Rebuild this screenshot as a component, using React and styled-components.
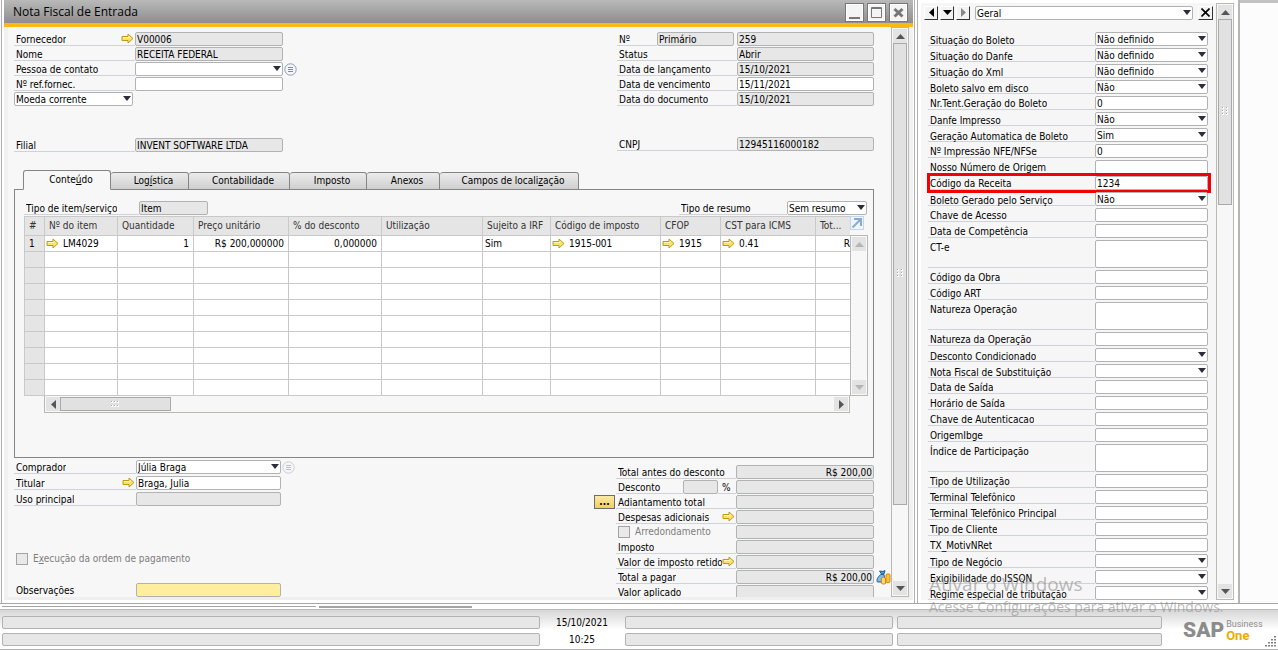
import { useId } from "react"
import styled, { createGlobalStyle, css } from "styled-components"

const GlobalStyle = createGlobalStyle`
  * {
    box-sizing: border-box;
  }

  body {
    margin: 0;
    background: #fcfcfc;
    color: #000;
    font: 10px/14px "DejaVu Sans Condensed", Tahoma, sans-serif;
  }

  button, input, select, textarea {
    font: inherit;
    color: inherit;
    margin: 0;
  }
`

const Screen = styled.div`
  display: flex;
  flex-direction: column;
  height: 100vh;
  min-height: 640px;
  overflow: hidden;
  position: relative;
`

const Workspace = styled.div`
  flex: 1;
  min-height: 0;
  display: flex;
`

/* ---------- shared form parts ---------- */

const box = css`
  display: block;
  width: 100%;
  height: ${({ $tall }) => ($tall ? "28px" : "14px")};
  padding: 1px 1px 0;
  border: 1px solid #b0b2b3;
  border-radius: 2px;
  background: ${({ $tone }) =>
    $tone === "grey" ? "#e7e7e7" : $tone === "yellow" ? "#ffee9e" : "#fff"};
  text-align: ${({ $right }) => ($right ? "right" : "left")};
  outline: none;
`

const TextBox = styled.input`
  ${box}
`

const Area = styled.textarea`
  ${box}
  resize: none;
`

const SelectBox = styled.select`
  ${box}
  appearance: none;
  padding: 0 14px 0 1px;
`

const SelectWrap = styled.span`
  display: block;
  position: relative;
  width: 100%;

  &::after {
    content: "";
    position: absolute;
    top: 4px;
    right: 2px;
    border: 4px solid transparent;
    border-top: 5px solid #2b2d3a;
    border-bottom: 0;
    pointer-events: none;
  }
`

const Row = styled.div`
  display: grid;
  grid-template-columns: ${({ $cols }) => $cols};
  margin-bottom: ${({ $gap }) => $gap || "1px"};
  position: relative;
`

const Label = styled.label`
  display: flex;
  align-items: flex-start;
  justify-content: space-between;
  border-bottom: ${({ $plain }) => ($plain ? "0" : "1px solid #cfd3d8")};
  padding: ${({ $low }) => ($low ? "2px" : "1px")} 1px 0 2px;
  height: ${({ $tall }) => ($tall ? "28px" : "14px")};
  white-space: nowrap;
  min-width: 0;

  & span {
    overflow: hidden;
  }
`

const Highlight = styled.div`
  position: absolute;
  inset: -3px -3px -3px -1px;
  border: 3px solid #f40000;
  pointer-events: none;
`

function Select({ options, ...rest }) {
  return (
    <SelectWrap>
      <SelectBox {...rest}>
        {options.map((o) => <option key={o}>{o}</option>)}
      </SelectBox>
    </SelectWrap>
  )
}

const ArrowIcon = styled.svg`
  flex: none;
  display: block;
`

function Arrow() {
  return (
    <ArrowIcon width="13" height="11" viewBox="0 0 13 11" aria-hidden="true">
      <path d="M1 3.5H7V1L12 5.5L7 10V7.5H1Z" fill="#fbe36a" stroke="#bd9a1c" />
      <path d="M2 4.5H8V3.2" fill="none" stroke="#fff6bd" />
    </ArrowIcon>
  )
}

const RoundButton = styled.button`
  position: absolute;
  left: 100%;
  top: 1px;
  width: 13px;
  height: 13px;
  margin-left: 1px;
  padding: 0;
  border: 0;
  background: none;
  opacity: ${({ $faded }) => ($faded ? 0.5 : 1)};

  & svg {
    display: block;
  }
`

function ListButton({ faded }) {
  return (
    <RoundButton aria-label="Lista" $faded={faded}>
      <svg width="13" height="13" viewBox="0 0 13 13">
        <circle cx="6.5" cy="6.5" r="5.7" fill="#f4f6fa" stroke={faded ? "#a6a6a6" : "#8e9bb8"} />
        <path d="M4 4.5H9M4 6.5H9M4 8.5H9" stroke="#8288a0" />
      </svg>
    </RoundButton>
  )
}

function Field({ label, value = "", cols, gap, tone, options, tall, arrow, highlight, right, low, list, faded }) {
  const id = useId()
  let control = <TextBox id={id} defaultValue={value} readOnly={tone === "grey"} $tone={tone} $right={right} />
  if (options) control = <Select id={id} options={options} />
  if (tall) control = <Area id={id} defaultValue={value} $tall />
  return (
    <Row $cols={cols} $gap={gap}>
      <Label htmlFor={id} $tall={tall} $low={low}>
        <span>{label}</span>
        {arrow && <Arrow />}
      </Label>
      {control}
      {list && <ListButton faded={faded} />}
      {highlight && <Highlight />}
    </Row>
  )
}

/* ---------- scroll bars ---------- */

const Bar = styled.div`
  display: flex;
  flex-direction: ${({ $row }) => ($row ? "row" : "column")};
  flex: none;
  ${({ $row }) => ($row ? "height: 17px;" : "width: 18px;")}
  padding: 1px;
  border: 1px solid #b9b9b4;
  border-top-width: ${({ $row }) => ($row ? "0" : "1px")};
  background: #f7f7f7;
`

const BarButton = styled.button`
  flex: none;
  display: grid;
  place-items: center;
  width: ${({ $row }) => ($row ? "14px" : "auto")};
  height: ${({ $row }) => ($row ? "auto" : "14px")};
  padding: 0;
  border: 0;
  background: #e3e3e3;
`

const Thumb = styled.div`
  flex: ${({ $size }) => $size} 0 0;
  display: grid;
  place-items: center;
  border: 1px solid #a9a9a9;
  background: #e1e1e1;
`

const Rest = styled.div`
  flex: ${({ $size }) => $size} 0 0;
`

const turns = { up: 0, right: 90, down: 180, left: 270 }

function Tri({ dir, color = "#555" }) {
  return (
    <svg width="9" height="9" viewBox="0 0 9 9" aria-hidden="true">
      <path d="M0 7L4.5 2L9 7Z" fill={color} transform={`rotate(${turns[dir]} 4.5 4.5)`} />
    </svg>
  )
}

function Grip({ row }) {
  const dots = row ? [[0, 1], [3, 1], [6, 1], [0, 5], [3, 5], [6, 5]] : [[1, 0], [5, 0], [1, 3], [5, 3], [1, 6], [5, 6]]
  return (
    <svg width="9" height="9" viewBox="0 0 9 9" aria-hidden="true">
      {dots.map(([x, y]) => (
        <g key={`${x}-${y}`}>
          <rect x={x} y={y} width="2" height="2" fill="#fff" />
          <rect x={x} y={y} width="1" height="1" fill="#a5a5a5" />
        </g>
      ))}
    </svg>
  )
}

function ScrollBar({ row, thumb, rest, color }) {
  return (
    <Bar $row={row}>
      <BarButton $row={row} aria-label="Voltar"><Tri dir={row ? "left" : "up"} color={color} /></BarButton>
      {thumb && <Thumb $size={thumb}><Grip row={row} /></Thumb>}
      <Rest $size={rest} />
      <BarButton $row={row} aria-label="Avançar"><Tri dir={row ? "right" : "down"} color={color} /></BarButton>
    </Bar>
  )
}

/* ---------- invoice window ---------- */

const Window = styled.section`
  flex: 1;
  min-width: 0;
  display: flex;
  flex-direction: column;
  margin-left: 1px;
  padding: 0 1px 0 2px;
  border-left: 1px solid #adadad;
  background: #fff;
`

const TitleBar = styled.header`
  display: flex;
  align-items: center;
  justify-content: space-between;
  flex: none;
  height: 27px;
  padding: 1px 5px 0 9px;
  border-bottom: 4px solid #fdb813;
  background: linear-gradient(#b9b9b9, #8e8e8e);

  & h1 {
    margin: 0;
    font: 12px/22px "Open Sans", sans-serif;
  }
`

const WindowButtons = styled.div`
  display: flex;
  gap: 3px;

  & button {
    width: 19px;
    height: 19px;
    padding: 0;
    border: 1px solid #777;
    background: #f4f4f4;
    box-shadow: inset 0 0 0 1px #fff;
  }

  & svg {
    display: block;
  }
`

const WindowBody = styled.div`
  flex: 1;
  min-height: 0;
  display: flex;
  margin-bottom: 3px;
  border-left: 4px solid #f1f1f1;
  border-right: 4px solid #f1f1f1;
  border-bottom: 3px solid #efefef;
  background: #f7f7f7;
`

const Content = styled.div`
  flex: 1;
  min-width: 0;
  overflow: hidden;
  padding: 5px 17px 0 6px;
`

const Split = styled.div`
  display: flex;
  justify-content: space-between;
`

const Column = styled.div`
  width: ${({ $w }) => $w};
  padding-top: ${({ $top }) => $top || "0"};
`

const Narrow = styled.div`
  width: 119px;
`

const Spacer = styled.div`
  height: ${({ $h }) => $h};
`

const Tabs = styled.div`
  display: flex;
  align-items: flex-end;
  height: 20px;
  padding-left: 9px;
  margin: 18px 0 -1px;
  position: relative;
`

const Tab = styled.button`
  width: ${({ $w }) => $w}px;
  height: ${({ $active }) => ($active ? "20px" : "18px")};
  padding: 0 0 0 8px;
  border: 1px solid #858585;
  border-left-width: ${({ $active }) => ($active ? "1px" : "0")};
  border-bottom-color: ${({ $active }) => ($active ? "#f7f7f7" : "#858585")};
  border-radius: 3px 3px 0 0;
  background: ${({ $active }) => ($active ? "#f7f7f7" : "linear-gradient(#ececec, #cfcfcf)")};
  white-space: nowrap;
`

const Panel = styled.div`
  border: 1px solid #858585;
  padding: 11px 5px 44px 9px;
`

const PanelHead = styled.div`
  display: flex;
  justify-content: space-between;
  padding-right: 1px;
`

const HeadField = styled.div`
  width: ${({ $w }) => $w};
`

const TableArea = styled.div`
  display: flex;
`

const TableSide = styled.div`
  display: flex;
  flex-direction: column;
  width: 18px;
  flex: none;

  & > div {
    flex: 1;
  }
`

const Expand = styled.button`
  width: 14px;
  height: 14px;
  margin-bottom: 5px;
  padding: 0;
  border: 1px solid #bdd7ee;
  background: #eef5fb;

  & svg {
    display: block;
  }
`

const TableClip = styled.div`
  flex: 1;
  min-width: 0;
  overflow: hidden;
`

const Table = styled.table`
  width: 100%;
  table-layout: fixed;
  border-collapse: collapse;

  & th, & td {
    height: 16px;
    padding: 0 4px;
    border: 1px solid #c9c9c9;
    line-height: 14px;
    font-weight: normal;
    text-align: left;
    white-space: nowrap;
    overflow: hidden;
    background: #fff;
  }

  & thead th {
    height: 19px;
    color: #333;
  }

  & thead th, & th[scope="row"] {
    background: #e5e5e5;
  }

  & tr > :last-child {
    border-right: 0;
    padding-right: 0;
  }
`

const Cell = styled.span`
  display: flex;
  align-items: center;
  justify-content: ${({ $right }) => ($right ? "flex-end" : "flex-start")};
  gap: 4px;
  margin-left: ${({ $arrow }) => ($arrow ? "-3px" : "-2px")};
`

const HScroll = styled.div`
  margin: 0 18px 0 20px;
`

const Check = styled.label`
  display: flex;
  align-items: center;
  gap: 5px;
  height: 14px;
  padding-left: 2px;
  color: #7d7d7d;

  & input {
    appearance: none;
    width: 12px;
    height: 12px;
    border: 1px solid #a3a3a3;
    background: #e9e9e9;
  }
`

const Percent = styled.div`
  display: grid;
  grid-template-columns: 67px 35px 18px;
  height: 14px;

  & > span {
    padding: 1px 0 0 4px;
    height: 14px;
    border-bottom: 1px solid #cfd3d8;
  }
`

const MoreButton = styled.button`
  position: absolute;
  right: 100%;
  top: 0;
  width: 21px;
  height: 14px;
  margin-right: 1px;
  padding: 0;
  border: 1px solid #6d6d6d;
  background: linear-gradient(#fbe9a8, #f2cf57);
  font-weight: bold;
  line-height: 10px;
`

const MoneyButton = styled.button`
  position: absolute;
  left: 100%;
  top: 0;
  margin-left: 2px;
  padding: 0;
  border: 0;
  background: none;

  & svg {
    display: block;
  }
`

const tabs = [
  { before: "Conte", key: "ú", after: "do", w: 88, active: true },
  { before: "Log", key: "í", after: "stica", w: 78 },
  { before: "Contabilidade", w: 101 },
  { before: "Imposto", w: 77 },
  { before: "Anexos", w: 73 },
  { before: "Campos de locali", key: "z", after: "ação", w: 139 },
]

const columns = [
  { title: "#", w: 20 },
  { title: "Nº do item", w: 73, value: "LM4029", arrow: true },
  { title: "Quantidade", w: 76, value: "1", right: true },
  { title: "Preço unitário", w: 95, value: "R$ 200,000000", right: true },
  { title: "% do desconto", w: 93, value: "0,000000", right: true },
  { title: "Utilização", w: 101 },
  { title: "Sujeito a IRF", w: 68, value: "Sim" },
  { title: "Código de imposto", w: 110, value: "1915-001", arrow: true },
  { title: "CFOP", w: 60, value: "1915", arrow: true },
  { title: "CST para ICMS", w: 95, value: "0.41", arrow: true },
  { title: "Tot...", value: "R", right: true },
]

const leftCols = "121px 1fr"
const rightCols = "120px 1fr"

function Header() {
  const id = useId()
  return (
    <Split>
      <Column $w="269px">
        <Field cols={leftCols} label="Fornecedor" value="V00006" tone="grey" arrow />
        <Field cols={leftCols} label="Nome" value="RECEITA FEDERAL" tone="grey" />
        <Field cols={leftCols} label="Pessoa de contato" options={[""]} list />
        <Field cols={leftCols} label="Nº ref.fornec." />
        <Narrow>
          <Select options={["Moeda corrente"]} aria-label="Moeda" />
        </Narrow>
        <Spacer $h="32px" />
        <Field cols={leftCols} gap="0" label="Filial" value="INVENT SOFTWARE LTDA" tone="grey" />
      </Column>
      <Column $w="257px">
        <Row $cols="40px 77px 3px 1fr">
          <Label htmlFor={id}>Nº</Label>
          <TextBox aria-label="Série" defaultValue="Primário" readOnly $tone="grey" />
          <i />
          <TextBox id={id} defaultValue="259" readOnly $tone="grey" />
        </Row>
        <Field cols={rightCols} label="Status" value="Abrir" tone="grey" />
        <Field cols={rightCols} label="Data de lançamento" value="15/10/2021" tone="grey" />
        <Field cols={rightCols} label="Data de vencimento" value="15/11/2021" />
        <Field cols={rightCols} label="Data do documento" value="15/10/2021" tone="grey" />
        <Spacer $h="30px" />
        <Field cols={rightCols} gap="0" label="CNPJ" value="12945116000182" tone="grey" />
      </Column>
    </Split>
  )
}

function ItemsTable() {
  return (
    <TableArea>
      <TableClip>
        <Table>
          <colgroup>
            {columns.map((c) => <col key={c.title} width={c.w} />)}
          </colgroup>
          <thead>
            <tr>{columns.map((c) => <th key={c.title} scope="col">{c.title}</th>)}</tr>
          </thead>
          <tbody>
            {Array.from({ length: 10 }, (_, i) => (
              <tr key={i}>
                <th scope="row">{i === 0 ? "1" : ""}</th>
                {columns.slice(1).map((c) => (
                  <td key={c.title}>
                    {i === 0 && c.value && (
                      <Cell $right={c.right} $arrow={c.arrow}>
                        {c.arrow && <Arrow />}
                        {c.value}
                      </Cell>
                    )}
                  </td>
                ))}
              </tr>
            ))}
          </tbody>
        </Table>
      </TableClip>
      <TableSide>
        <Expand aria-label="Expandir">
          <svg width="12" height="12" viewBox="0 0 12 12">
            <path d="M1.5 10.5L9 3M3 2H10V9" fill="none" stroke="#8ea9cf" strokeWidth="2" />
          </svg>
        </Expand>
        <ScrollBar rest={1} color="#b5b5b5" />
      </TableSide>
    </TableArea>
  )
}

function Totals() {
  const id = useId()
  return (
    <Column $w="258px" $top="7px">
      <Field cols={rightCols} label="Total antes do desconto" value="R$ 200,00" tone="grey" right />
      <Row $cols={rightCols}>
        <Percent>
          <Label htmlFor={id}>Desconto</Label>
          <TextBox aria-label="Desconto em porcentagem" readOnly $tone="grey" />
          <span>%</span>
        </Percent>
        <TextBox id={id} readOnly $tone="grey" />
      </Row>
      <Row $cols="1fr" $gap="0">
        <Field cols={rightCols} label="Adiantamento total" tone="grey" />
        <MoreButton>...</MoreButton>
      </Row>
      <Field cols={rightCols} label="Despesas adicionais" tone="grey" arrow />
      <Row $cols={rightCols}>
        <Check><input type="checkbox" disabled />Arredondamento</Check>
        <TextBox aria-label="Arredondamento" readOnly $tone="grey" />
      </Row>
      <Field cols={rightCols} label="Imposto" tone="grey" />
      <Field cols={rightCols} label="Valor de imposto retido" tone="grey" arrow />
      <Row $cols="1fr" $gap="0">
        <Field cols={rightCols} label="Total a pagar" value="R$ 200,00" tone="grey" right />
        <MoneyButton aria-label="Meios de pagamento">
          <svg width="15" height="15" viewBox="0 0 15 15">
            <path d="M3.5 1L7 1.5L9 0.5L8 4H5.500Z" fill="#4fa3dc" stroke="#1f5f95" />
            <path d="M5 4.500H8L9 12H1.500C0 10 2 6.500 5 4.500Z" fill="#7fbfea" stroke="#1f5f95" />
            <path d="M10 4.500Q12 3 14 4.500V12Q12 13.500 10 12Z" fill="#ffc04a" stroke="#e08a00" />
            <path d="M5.500 8Q7.500 6.500 9.500 8V13.500Q7.500 14.800 5.500 13.500Z" fill="#ffd77c" stroke="#e08a00" />
          </svg>
        </MoneyButton>
      </Row>
      <Field cols={rightCols} label="Valor aplicado" tone="grey" />
    </Column>
  )
}

function InvoiceWindow() {
  return (
    <Window>
      <TitleBar>
        <h1>Nota Fiscal de Entrada</h1>
        <WindowButtons>
          <button aria-label="Minimizar">
            <svg width="17" height="17"><path d="M3 14H14" stroke="#777" strokeWidth="2" /></svg>
          </button>
          <button aria-label="Maximizar">
            <svg width="17" height="17"><path d="M3.500 3.500H13.500V13.500H3.500ZM3 4.500H14" fill="none" stroke="#777" /></svg>
          </button>
          <button aria-label="Fechar">
            <svg width="17" height="17"><path d="M4.500 5L12.500 12.500M12.500 5L4.500 12.500" stroke="#777" strokeWidth="3" /></svg>
          </button>
        </WindowButtons>
      </TitleBar>
      <WindowBody>
        <Content>
          <Header />
          <Tabs role="tablist">
            {tabs.map((t) => (
              <Tab key={t.before} role="tab" aria-selected={!!t.active} $w={t.w} $active={t.active}>
                {t.before}{t.key && <u>{t.key}</u>}{t.after}
              </Tab>
            ))}
          </Tabs>
          <Panel>
            <PanelHead>
              <HeadField $w="184px">
                <Field cols="115px 1fr" label="Tipo de item/serviço" value="Item" tone="grey" />
              </HeadField>
              <HeadField $w="188px">
                <Field cols="108px 1fr" label="Tipo de resumo" options={["Sem resumo"]} />
              </HeadField>
            </PanelHead>
            <ItemsTable />
            <HScroll>
              <ScrollBar row thumb={109} rest={662} />
            </HScroll>
          </Panel>
          <Split>
            <Column $w="267px" $top="2px">
              <Field cols="122px 1fr" gap="2px" label="Comprador" options={["Júlia Braga"]} list faded />
              <Field cols="122px 1fr" gap="2px" label="Titular" value="Braga, Julia" arrow />
              <Field cols="122px 1fr" gap="2px" label="Uso principal" tone="grey" />
              <Spacer $h="44px" />
              <Check><input type="checkbox" disabled /><span>E<u>x</u>ecução da ordem de pagamento</span></Check>
              <Spacer $h="17px" />
              <Row $cols="122px 1fr">
                <Label htmlFor="obs" $plain>Observações</Label>
                <TextBox id="obs" $tone="yellow" />
              </Row>
            </Column>
            <Totals />
          </Split>
        </Content>
        <ScrollBar thumb={463} rest={77} />
      </WindowBody>
    </Window>
  )
}

/* ---------- user defined fields panel ---------- */

const Side = styled.aside`
  display: flex;
  flex: none;
  width: 326px;
  border-left: 4px double #b0b0b0;
  border-right: 2px solid #b5b5b5;
  background: #fff;
  padding: 3px 4px 3px 3px;
`

const SideMain = styled.div`
  flex: 1;
  min-width: 0;
  overflow: hidden;
  padding: 2px 8px 0 7px;
  background: #f6f6f6;
`

const Toolbar = styled.div`
  display: grid;
  grid-template-columns: 14px 14px 14px 1fr 15px;
  align-items: center;
  gap: 2px;
  height: 15px;
  margin: 0 -5px 12px -4px;

  & > span {
    margin-left: 3px;
    width: auto;
    margin-right: 3px;
  }
`

const ToolButton = styled.button`
  display: grid;
  place-items: center;
  height: 14px;
  padding: 0;
  border: 1px solid #fff;
  border-right-color: #333;
  border-bottom-color: #333;
  background: #f3f3f3;
`

const Desktop = styled.div`
  flex: none;
  width: 38px;
  border-top: 3px solid #c2c2c2;
  background: #fcfcfc;
`

const sideFields = [
  { label: "Situação do Boleto", options: ["Não definido"] },
  { label: "Situação do Danfe", options: ["Não definido"] },
  { label: "Situação do Xml", options: ["Não definido"] },
  { label: "Boleto salvo em disco", options: ["Não"] },
  { label: "Nr.Tent.Geração do Boleto", value: "0" },
  { label: "Danfe Impresso", options: ["Não"] },
  { label: "Geração Automatica de Boleto", options: ["Sim"] },
  { label: "Nº Impressão NFE/NFSe", value: "0" },
  { label: "Nosso Número de Origem" },
  { label: "Código da Receita", value: "1234", highlight: true },
  { label: "Boleto Gerado pelo Serviço", options: ["Não"] },
  { label: "Chave de Acesso" },
  { label: "Data de Competência" },
  { label: "CT-e", tall: true },
  { label: "Código da Obra" },
  { label: "Código ART" },
  { label: "Natureza Operação", tall: true },
  { label: "Natureza da Operação" },
  { label: "Desconto Condicionado", options: [""] },
  { label: "Nota Fiscal de Substituição", options: [""] },
  { label: "Data de Saída" },
  { label: "Horário de Saída" },
  { label: "Chave de Autenticacao" },
  { label: "OrigemIbge" },
  { label: "Índice de Participação", tall: true },
  { label: "Tipo de Utilização" },
  { label: "Terminal Telefônico" },
  { label: "Terminal Telefônico Principal" },
  { label: "Tipo de Cliente" },
  { label: "TX_MotivNRet" },
  { label: "Tipo de Negócio", options: [""] },
  { label: "Exigibilidade do ISSQN", options: [""] },
  { label: "Regime especial de tributação", options: [""] },
]

function SidePanel() {
  return (
    <Side>
      <SideMain>
        <Toolbar>
          <ToolButton aria-label="Anterior"><Tri dir="left" color="#000" /></ToolButton>
          <ToolButton aria-label="Lista"><Tri dir="down" color="#000" /></ToolButton>
          <ToolButton aria-label="Próximo"><Tri dir="right" color="#888" /></ToolButton>
          <Select options={["Geral"]} aria-label="Categoria" />
          <ToolButton aria-label="Fechar">
            <svg width="9" height="9" viewBox="0 0 9 9"><path d="M0.500 0.500L8.500 8.500M8.500 0.500L0.500 8.500" stroke="#000" strokeWidth="1.600" /></svg>
          </ToolButton>
        </Toolbar>
        {sideFields.map((f) => (
          <Field key={f.label} cols="167px 1fr" gap="2px" low={!!f.options} {...f} />
        ))}
      </SideMain>
      <ScrollBar thumb={184} rest={380} />
    </Side>
  )
}

/* ---------- bottom ---------- */

const Dock = styled.div`
  flex: none;
  display: flex;
  gap: 3px;
  height: 7px;
  padding: 2px 0 0 2px;
  border-top: 1px solid #a6a6a6;
  border-bottom: 1px solid #b9b9b9;
  background: #fff;
`

const DockItem = styled.div`
  width: ${({ $w }) => $w};
  height: ${({ $strong }) => ($strong ? "2px" : "1px")};
  background: #a3a3a3;
`

const StatusBar = styled.footer`
  flex: none;
  display: grid;
  grid-template-columns: 2fr 85px 1fr 1fr 116px;
  align-items: center;
  height: 40px;
  padding: 5px 0 3px 2px;
  border-bottom: 1px solid #b0b0b0;
  background: linear-gradient(#d6d6d6, #fff 50%);
`

const Stack = styled.div`
  display: grid;
  gap: 4px;
  margin-left: ${({ $gap }) => $gap || "0"};
  text-align: center;
  line-height: 13px;

  & input {
    height: 13px;
  }
`

const Logo = styled.div`
  display: flex;
  align-items: center;
  gap: 2px;
  padding-left: 21px;
  position: relative;
  color: #8c8c8c;
  font: 900 21px/21px Roboto, sans-serif;

  & > div {
    font: 9px/10px Roboto, sans-serif;
  }

  & strong {
    display: block;
    color: #f0ab00;
    font: bold 13px/13px Roboto, sans-serif;
  }

  & svg {
    position: absolute;
    right: 1px;
    bottom: -6px;
  }
`

const Watermark = styled.div`
  position: absolute;
  left: 929px;
  bottom: 33px;
  color: rgba(140, 140, 140, 0.6);
  font: 14px/20px "Open Sans", sans-serif;
  white-space: nowrap;
  pointer-events: none;

  & strong {
    display: block;
    font: 19px/26px "Open Sans", sans-serif;
  }
`

function MessageFields({ gap }) {
  return (
    <Stack $gap={gap}>
      <TextBox aria-label="Mensagem" readOnly $tone="grey" />
      <TextBox aria-label="Detalhe" readOnly $tone="grey" />
    </Stack>
  )
}

export default function App() {
  return (
    <Screen>
      <GlobalStyle />
      <Workspace>
        <InvoiceWindow />
        <SidePanel />
        <Desktop />
      </Workspace>
      <Dock>
        <DockItem $w="314px" />
        <DockItem $w="153px" $strong />
      </Dock>
      <StatusBar>
        <MessageFields />
        <Stack>
          <span>15/10/2021</span>
          <span>10:25</span>
        </Stack>
        <MessageFields />
        <MessageFields gap="4px" />
        <Logo>
          SAP
          <div>Business<strong>One</strong></div>
          <svg width="12" height="12" viewBox="0 0 12 12" aria-hidden="true">
            <path d="M10 0v12M7 3v9M4 6v6M1 9v3" stroke="#555" strokeWidth="1.500" strokeDasharray="1.500 1.500" />
          </svg>
        </Logo>
      </StatusBar>
      <Watermark><strong>Ativar o Windows</strong>Acesse Configurações para ativar o Windows.</Watermark>
    </Screen>
  )
}
